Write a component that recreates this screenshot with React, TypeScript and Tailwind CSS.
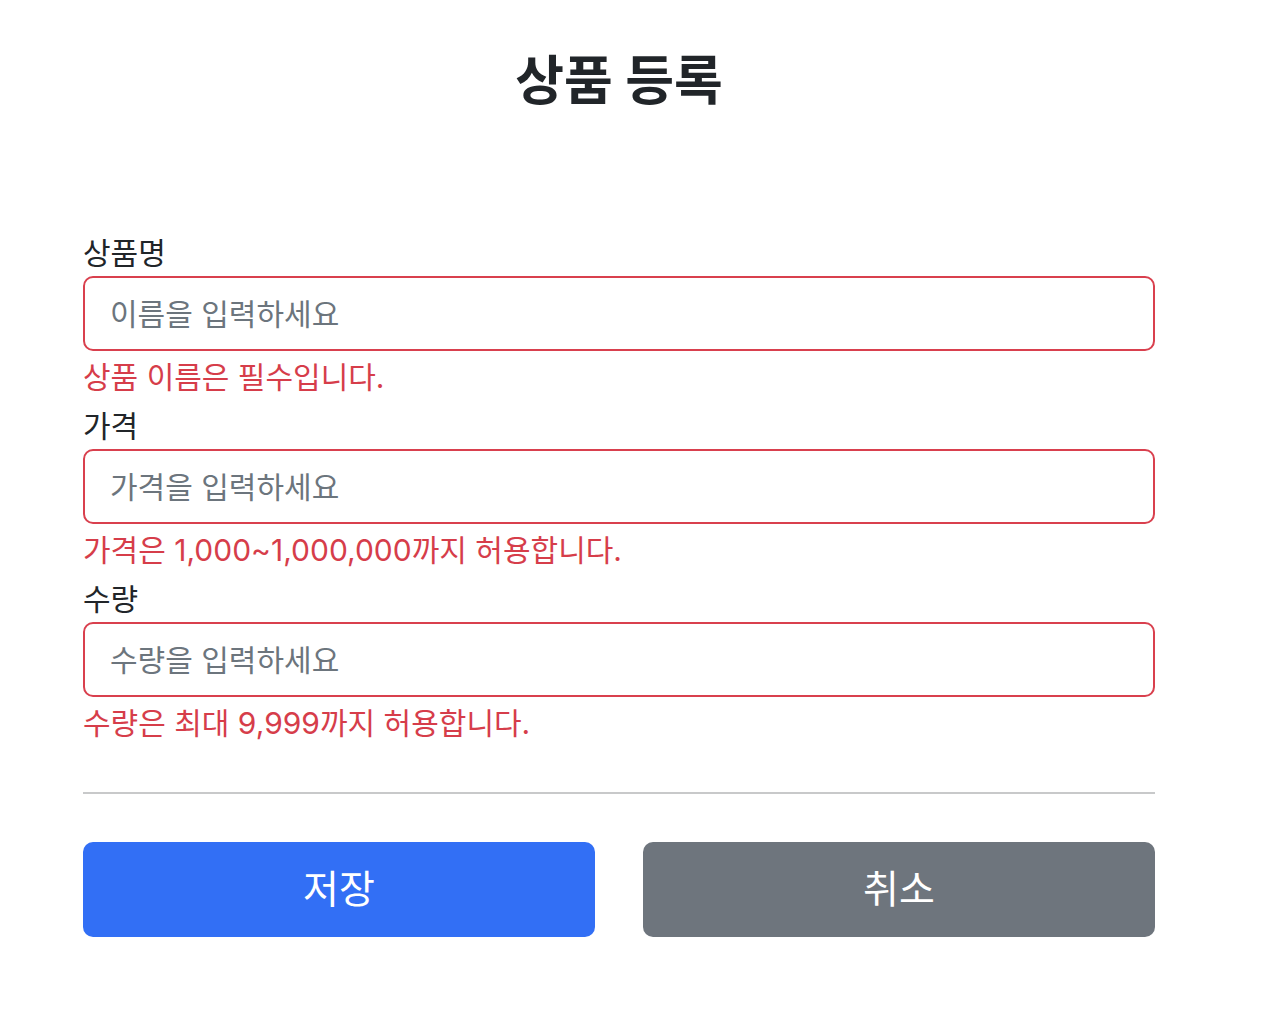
import React from "react";

const font = { fontFamily: 'Inter, "Noto Sans CJK KR", "Noto Sans", sans-serif' };

function Field({ label, placeholder, error }: { label: string; placeholder: string; error: string }) {
  return (
    <div className="flex flex-col">
      <label className="pt-[6px] text-[30px] leading-[46px] text-[#212529]">{label}</label>
      <input
        type="text"
        placeholder={placeholder}
        className="h-[75px] w-full rounded-[10px] border-2 border-[#d9404e] bg-white px-[25px] text-[30px] text-[#212529] outline-none placeholder:text-[#6c757d]"
        style={font}
      />
      <div className="mt-[6px] text-[30px] leading-[40px] text-[#d63d4a]">{error}</div>
    </div>
  );
}

export default function App() {
  return (
    <div className="min-h-screen w-full bg-white pl-[83px] pr-[111px]" style={font}>
      <div className="pt-[49px] text-center">
        <h2 className="text-[53px] font-bold leading-[64px] text-[#212529]">상품 등록</h2>
      </div>
      <form className="mt-[111px] flex flex-col">
        <Field label="상품명" placeholder="이름을 입력하세요" error="상품 이름은 필수입니다." />
        <Field label="가격" placeholder="가격을 입력하세요" error="가격은 1,000~1,000,000까지 허용합니다." />
        <Field label="수량" placeholder="수량을 입력하세요" error="수량은 최대 9,999까지 허용합니다." />
        <hr className="mt-[49px] border-t-2 border-[#c8c9ca]" />
        <div className="mt-[48px] grid grid-cols-2 gap-[48px]">
          <button type="button" className="h-[95px] rounded-[10px] bg-[#326ff5] text-[39px] text-white">
            저장
          </button>
          <button type="button" className="h-[95px] rounded-[10px] bg-[#6e757d] text-[39px] text-white">
            취소
          </button>
        </div>
      </form>
    </div>
  );
}
